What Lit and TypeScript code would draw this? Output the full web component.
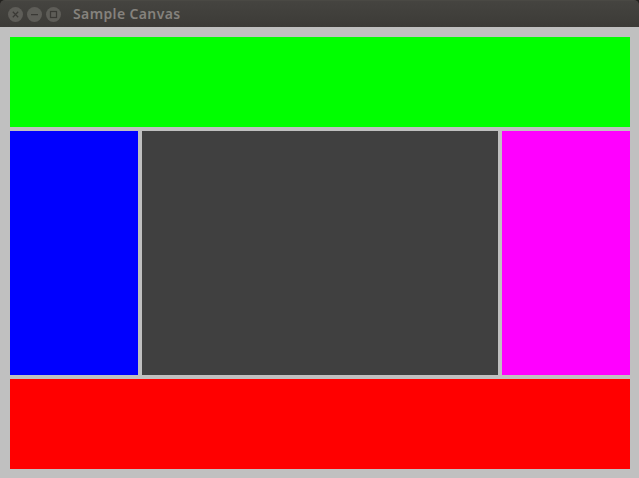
import { LitElement, html, css, svg } from "lit";
import { customElement } from "lit/decorators.js";

const glyphs = [
  svg`<path d="M4.8 4.8 L10.2 10.2 M10.2 4.8 L4.8 10.2" />`,
  svg`<path d="M4 7.5 H11" />`,
  svg`<rect x="4.5" y="4.5" width="6" height="6" />`,
];

@customElement("app-root")
export class AppRoot extends LitElement {
  static styles = css`
    :host {
      display: flex;
      flex-direction: column;
      height: 100vh;
      background: #c0c0c0;
    }
    .frame {
      flex: none;
      background: #23221f;
    }
    .titlebar {
      box-sizing: border-box;
      display: flex;
      align-items: center;
      height: 27px;
      padding-left: 8px;
      background: linear-gradient(#454440, #3c3b37);
      border-top: 1px solid #4a4944;
      border-radius: 5px 5px 0 0;
    }
    .buttons {
      display: flex;
      gap: 4px;
    }
    .button {
      display: block;
      width: 15px;
      height: 15px;
      border-radius: 50%;
      background: #5e5d58;
    }
    .button * {
      fill: none;
      stroke: #3a3935;
      stroke-width: 1.25;
    }
    .title {
      margin-left: 12px;
      font: 600 14px/20px "Noto Sans", "Open Sans", sans-serif;
      letter-spacing: 0.37px;
      color: #85827d;
      white-space: nowrap;
    }
    .canvas {
      flex: 1;
      display: grid;
      grid-template: 90px 1fr 90px / 128px 1fr 128px;
      gap: 4px;
      padding: 10px 9px 9px 10px;
    }
    .top {
      grid-column: 1 / -1;
      background: #00ff00;
    }
    .left {
      background: #0000ff;
    }
    .center {
      background: #404040;
    }
    .right {
      background: #ff00ff;
    }
    .bottom {
      grid-column: 1 / -1;
      background: #ff0000;
    }
  `;

  render() {
    return html`
      <div class="frame">
        <header class="titlebar">
          <div class="buttons">
            ${glyphs.map((g) => html`<svg class="button" viewBox="0 0 15 15">${g}</svg>`)}
          </div>
          <span class="title">Sample Canvas</span>
        </header>
      </div>
      <main class="canvas">
        <div class="top"></div>
        <div class="left"></div>
        <div class="center"></div>
        <div class="right"></div>
        <div class="bottom"></div>
      </main>
    `;
  }
}
